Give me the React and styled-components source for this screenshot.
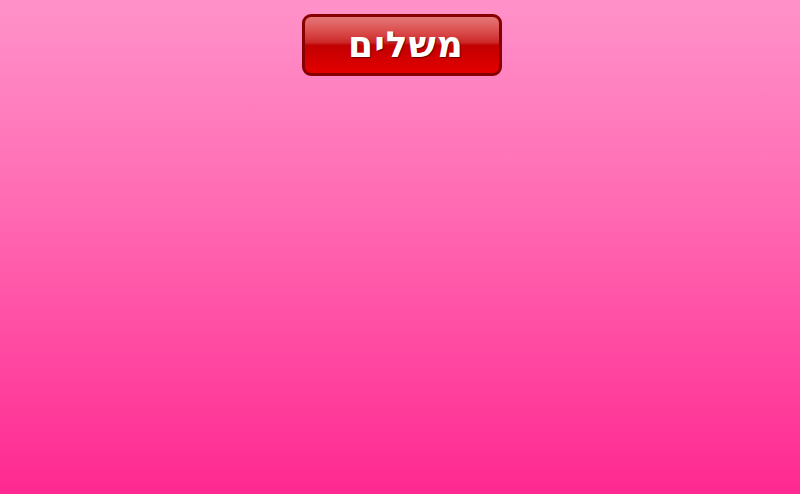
import React from "react";
import styled, { createGlobalStyle } from "styled-components";

const Global = createGlobalStyle`
  html, body { margin: 0; padding: 0; height: 100%; }
  #root { height: 100%; }
  body { font-family: "Liberation Sans", Arial, sans-serif; }
`;

const Page = styled.div`
  height: 100vh;
  min-height: 494px;
  background: linear-gradient(to bottom, #ff92c9 0%, #ff6cb4 40%, #ff2890 100%);
  display: flex;
  justify-content: center;
  align-items: flex-start;
  padding-top: 14px;
  padding-left: 4px;
  box-sizing: border-box;
`;

const Button = styled.button`
  width: 200px;
  height: 62px;
  box-sizing: border-box;
  border: 3px solid #860000;
  border-radius: 9px;
  padding: 0 0 0 8px;
  background: linear-gradient(
    to bottom,
    #e47676 0%,
    #e06464 12%,
    #d84646 30%,
    #cc2626 46%,
    #c20202 50%,
    #c80000 60%,
    #d60000 80%,
    #e40000 100%
  );
  display: flex;
  align-items: center;
  justify-content: center;
  cursor: pointer;
`;

const Label = styled.span`
  font-family: "DejaVu Sans", "Liberation Sans", Arial, sans-serif;
  font-weight: bold;
  font-size: 36px;
  letter-spacing: 1px;
  color: #ffffff;
  direction: rtl;
  text-shadow: 1px 1px 1px rgba(90, 0, 0, 0.85);
  line-height: 1;
  margin-top: -1px;
`;

export default function App() {
  return (
    <>
      <Global />
      <Page>
        <Button>
          <Label>משלים</Label>
        </Button>
      </Page>
    </>
  );
}
